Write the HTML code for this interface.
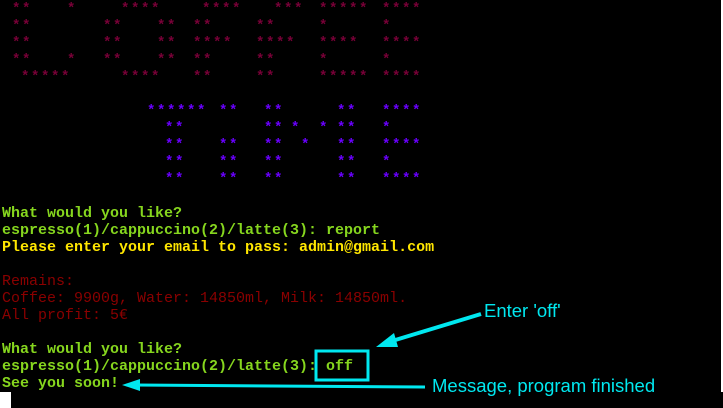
<!DOCTYPE html>
<html><head><meta charset="utf-8"><style>
html,body{margin:0;padding:0;width:723px;height:408px;overflow:hidden;background:#fff;}
#t{position:absolute;left:0;top:0;width:721px;height:392px;background:#000;}
#b{position:absolute;left:11px;top:392px;width:712px;height:16px;background:#000;}
.s{position:absolute;font:bold 14px "Liberation Mono",monospace;letter-spacing:1.6px;line-height:14px;white-space:pre;}
.r{color:#7a0038;}
.u{color:#6a00ff;}
.l{position:absolute;left:2px;font:bold 15px "Liberation Mono",monospace;line-height:17px;white-space:pre;}
.g{color:#86d61e;}.y{color:#ffe600;}.d{color:#8a0000;font-weight:normal;}
.a{position:absolute;font:18.5px "Liberation Sans",sans-serif;color:#00e8f0;white-space:pre;}
</style></head><body>
<div id="t"></div><div id="b"></div>
<div id="art"></div>
<div class="l g" style="top:205px">What would you like?</div>
<div class="l g" style="top:222px">espresso(1)/cappuccino(2)/latte(3): report</div>
<div class="l y" style="top:239px">Please enter your email to pass: admin@gmail.com</div>
<div class="l d" style="top:273px">Remains:</div>
<div class="l d" style="top:290px">Coffee: 9900g, Water: 14850ml, Milk: 14850ml.</div>
<div class="l d" style="top:307px">All profit: 5€</div>
<div class="l g" style="top:341px">What would you like?</div>
<div class="l g" style="top:358px">espresso(1)/cappuccino(2)/latte(3): off</div>
<div class="l g" style="top:375px">See you soon!</div>
<svg style="position:absolute;left:0;top:0" width="723" height="408">
<rect x="316" y="351" width="52" height="29" fill="none" stroke="#00e8f0" stroke-width="3"/>
<line x1="481" y1="314" x2="392" y2="341" stroke="#00e8f0" stroke-width="4"/>
<polygon points="376,347 394,333 398,347" fill="#00e8f0"/>
<line x1="425" y1="387" x2="135" y2="385" stroke="#00e8f0" stroke-width="3"/>
<polygon points="122,385 140,379 140,391" fill="#00e8f0"/>
</svg>
<div class="a" style="left:484px;top:300px">Enter 'off'</div>
<div class="a" style="left:432px;top:375px">Message, program finished</div>
<script>
var R=[[0,[[13,2],[68,1],[122,4],[203,4],[275,3],[320,5],[383,4]]],
[17,[[13,2],[104,2],[158,2],[194,2],[257,2],[320,1],[383,1]]],
[34,[[13,2],[104,2],[158,2],[194,4],[257,4],[320,4],[383,4]]],
[51,[[13,2],[68,1],[104,2],[158,2],[194,2],[257,2],[320,1],[383,1]]],
[68,[[22,5],[122,4],[194,2],[257,2],[320,5],[383,4]]]];
var B=[[102,[[148,6],[220,2],[265,2],[338,2],[383,4]]],
[119,[[166,2],[265,2],[292,1],[320,1],[338,2],[383,1]]],
[136,[[166,2],[220,2],[265,2],[302,1],[338,2],[383,4]]],
[153,[[166,2],[220,2],[265,2],[338,2],[383,1]]],
[170,[[166,2],[220,2],[265,2],[338,2],[383,4]]]];
var h='';
function f(a,c){a.forEach(function(r){r[1].forEach(function(g){h+='<div class="s '+c+'" style="left:'+(g[0]-1)+'px;top:'+(r[0]+2)+'px">'+'*'.repeat(g[1])+'</div>';});});}
f(R,'r');f(B,'u');
document.getElementById('art').innerHTML=h;
</script>
</body></html>
